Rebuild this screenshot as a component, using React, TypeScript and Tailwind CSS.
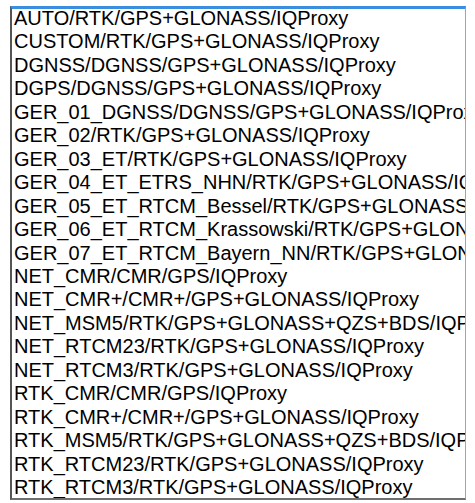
import React from 'react';

const items = [
  'AUTO/RTK/GPS+GLONASS/IQProxy',
  'CUSTOM/RTK/GPS+GLONASS/IQProxy',
  'DGNSS/DGNSS/GPS+GLONASS/IQProxy',
  'DGPS/DGNSS/GPS+GLONASS/IQProxy',
  'GER_01_DGNSS/DGNSS/GPS+GLONASS/IQProxy',
  'GER_02/RTK/GPS+GLONASS/IQProxy',
  'GER_03_ET/RTK/GPS+GLONASS/IQProxy',
  'GER_04_ET_ETRS_NHN/RTK/GPS+GLONASS/IQProxy',
  'GER_05_ET_RTCM_Bessel/RTK/GPS+GLONASS/IQProxy',
  'GER_06_ET_RTCM_Krassowski/RTK/GPS+GLONASS/IQProxy',
  'GER_07_ET_RTCM_Bayern_NN/RTK/GPS+GLONASS/IQProxy',
  'NET_CMR/CMR/GPS/IQProxy',
  'NET_CMR+/CMR+/GPS+GLONASS/IQProxy',
  'NET_MSM5/RTK/GPS+GLONASS+QZS+BDS/IQProxy',
  'NET_RTCM23/RTK/GPS+GLONASS/IQProxy',
  'NET_RTCM3/RTK/GPS+GLONASS/IQProxy',
  'RTK_CMR/CMR/GPS/IQProxy',
  'RTK_CMR+/CMR+/GPS+GLONASS/IQProxy',
  'RTK_MSM5/RTK/GPS+GLONASS+QZS+BDS/IQProxy',
  'RTK_RTCM23/RTK/GPS+GLONASS/IQProxy',
  'RTK_RTCM3/RTK/GPS+GLONASS/IQProxy',
];

export default function App() {
  return (
    <div className="w-[475px] h-[503px] bg-white pl-[10px] pt-[6px]">
      <div className="w-[456px] h-[494px] overflow-hidden bg-white border-l-2 border-l-[#555555] border-t-[3px] border-t-[#3b8de0] border-r border-r-[#a5a5a5] border-b-2 border-b-[#6e6e6e]">
        <ul className="pl-[2px] -mt-[2px] font-['Liberation_Sans',Arial,sans-serif] text-[20px] leading-[23.45px] text-black whitespace-nowrap">
          {items.map((item) => (
            <li key={item}>{item}</li>
          ))}
        </ul>
      </div>
    </div>
  );
}
